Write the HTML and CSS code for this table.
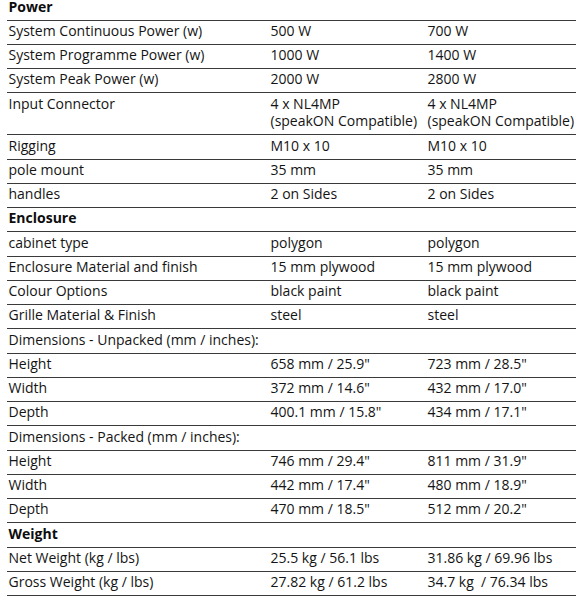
FILE: index.html
```
<!DOCTYPE html>
<html>
<head>
<meta charset="utf-8">
<link rel="stylesheet" href="styles.css">
</head>
<body>
<table class="spec">
  <colgroup><col class="c1"><col class="c2"><col class="c3"></colgroup>
  <tbody>
    <tr class="section"><td>Power</td><td></td><td></td></tr>
    <tr><td>System Continuous Power (w)</td><td>500 W</td><td>700 W</td></tr>
    <tr><td>System Programme Power (w)</td><td>1000 W</td><td>1400 W</td></tr>
    <tr><td>System Peak Power (w)</td><td>2000 W</td><td>2800 W</td></tr>
    <tr><td>Input Connector</td><td>4 x NL4MP<br>(speakON Compatible)</td><td>4 x NL4MP<br>(speakON Compatible)</td></tr>
    <tr><td>Rigging</td><td>M10 x 10</td><td>M10 x 10</td></tr>
    <tr><td>pole mount</td><td>35 mm</td><td>35 mm</td></tr>
    <tr><td>handles</td><td>2 on Sides</td><td>2 on Sides</td></tr>
    <tr class="section"><td>Enclosure</td><td></td><td></td></tr>
    <tr><td>cabinet type</td><td>polygon</td><td>polygon</td></tr>
    <tr><td>Enclosure Material and finish</td><td>15 mm plywood</td><td>15 mm plywood</td></tr>
    <tr><td>Colour Options</td><td>black paint</td><td>black paint</td></tr>
    <tr><td>Grille Material &amp; Finish</td><td>steel</td><td>steel</td></tr>
    <tr><td>Dimensions - Unpacked (mm / inches):</td><td></td><td></td></tr>
    <tr><td>Height</td><td>658 mm / 25.9"</td><td>723 mm / 28.5"</td></tr>
    <tr><td>Width</td><td>372 mm / 14.6"</td><td>432 mm / 17.0"</td></tr>
    <tr><td>Depth</td><td>400.1 mm / 15.8"</td><td>434 mm / 17.1"</td></tr>
    <tr><td>Dimensions - Packed (mm / inches):</td><td></td><td></td></tr>
    <tr><td>Height</td><td>746 mm / 29.4"</td><td>811 mm / 31.9"</td></tr>
    <tr><td>Width</td><td>442 mm / 17.4"</td><td>480 mm / 18.9"</td></tr>
    <tr><td>Depth</td><td>470 mm / 18.5"</td><td>512 mm / 20.2"</td></tr>
    <tr class="section"><td>Weight</td><td></td><td></td></tr>
    <tr><td>Net Weight (kg / lbs)</td><td>25.5 kg / 56.1 lbs</td><td>31.86 kg / 69.96 lbs</td></tr>
    <tr><td>Gross Weight (kg / lbs)</td><td>27.82 kg / 61.2 lbs</td><td>34.7 kg &nbsp;/ 76.34 lbs</td></tr>
  </tbody>
</table>
</body>
</html>
```

FILE: styles.css
```
html, body {
  margin: 0;
  padding: 0;
  background: #ffffff;
}
body {
  font-family: "Open Sans", "Liberation Sans", sans-serif;
  font-size: 14px;
  color: #141414;
}
.spec {
  border-collapse: collapse;
  table-layout: fixed;
  width: 569px;
  margin: -3.6px 0 0 7px;
}
.c1 { width: 262px; }
.c2 { width: 157px; }
.c3 { width: 150px; }
.spec td {
  padding: 1.2px 1px 4.36px 1.5px;
  line-height: 17.7px;
  border-bottom: 1px solid #3a3a3a;
  vertical-align: top;
  white-space: nowrap;
  overflow: visible;
}
.section td {
  font-weight: 700;
  color: #0d0d0d;
}
```
